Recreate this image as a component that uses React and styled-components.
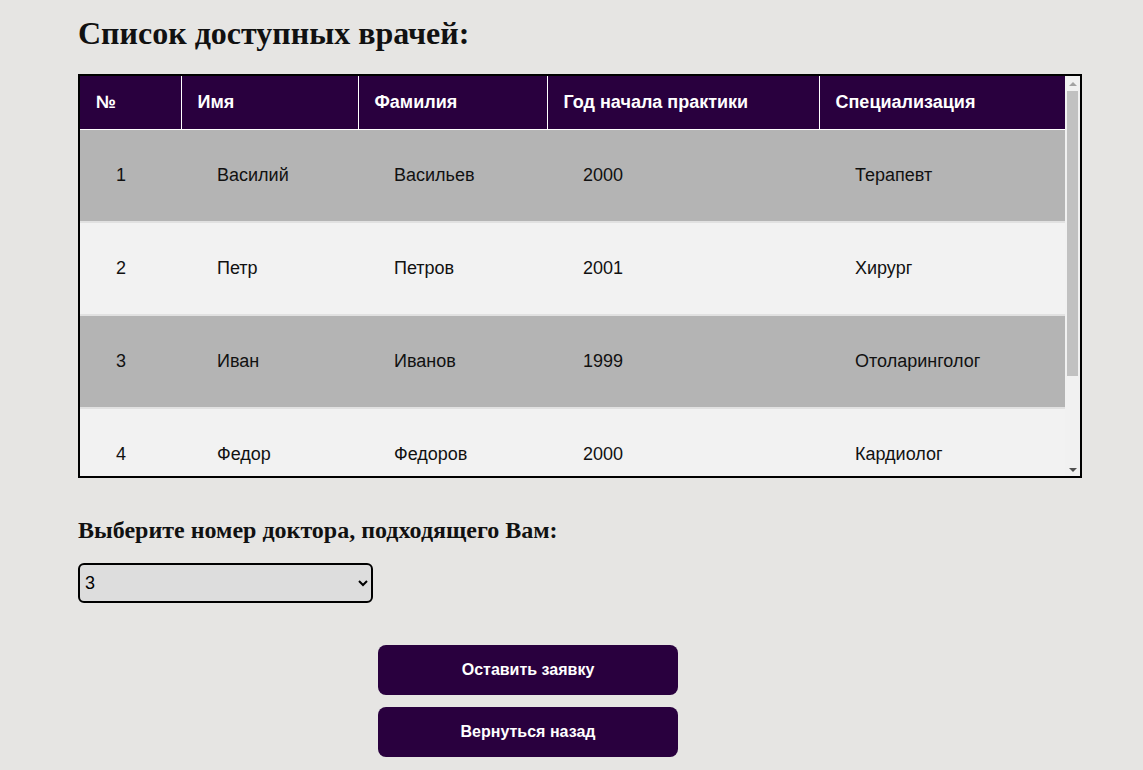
import React, { useLayoutEffect, useRef, useState } from "react";
import styled, { createGlobalStyle } from "styled-components";

const GlobalStyle = createGlobalStyle`
  html, body {
    margin: 0;
    background: #e6e5e3;
  }
  body {
    font-family: "Liberation Sans", Arial, sans-serif;
  }
`;

const doctors = [
  { id: 1, name: "Василий", surname: "Васильев", year: 2000, spec: "Терапевт" },
  { id: 2, name: "Петр", surname: "Петров", year: 2001, spec: "Хирург" },
  { id: 3, name: "Иван", surname: "Иванов", year: 1999, spec: "Отоларинголог" },
  { id: 4, name: "Федор", surname: "Федоров", year: 2000, spec: "Кардиолог" },
  { id: 5, name: "Сергей", surname: "Сергеев", year: 2005, spec: "Невролог" },
];

const columns = [
  ["№", 101],
  ["Имя", 177],
  ["Фамилия", 189],
  ["Год начала практики", 272],
  ["Специализация", 246],
];

const Page = styled.div`
  width: 1004px;
  padding: 0 0 14px 78px;
`;

const Title = styled.h1`
  font-family: "Liberation Serif", "Times New Roman", serif;
  font-size: 32px;
  font-weight: 700;
  color: #111;
  margin: 0;
  padding-top: 15px;
  line-height: 37px;
`;

const TableBox = styled.div`
  margin-top: 22px;
  height: 400px;
  border: 2px solid #000;
  display: flex;
  background: #f2f2f2;
`;

const Scroller = styled.div`
  flex: 1;
  overflow-y: auto;
  scrollbar-width: none;
  &::-webkit-scrollbar {
    display: none;
  }
`;

const ScrollBar = styled.div`
  width: 15px;
  display: flex;
  flex-direction: column;
  background: #f1f1f1;
`;

const Arrow = styled.div`
  height: 15px;
  display: flex;
  align-items: center;
  justify-content: center;
  &::before {
    content: "";
    border-left: 4px solid transparent;
    border-right: 4px solid transparent;
    ${(p) =>
      p.$down
        ? "border-top: 4px solid #505050; margin-top: 2px;"
        : "border-bottom: 4px solid #a3a3a3;"}
  }
`;

const Track = styled.div`
  flex: 1;
  padding: 0 2px;
`;

const Thumb = styled.div`
  background: #c1c1c1;
`;

const Table = styled.table`
  width: 100%;
  table-layout: fixed;
  border-collapse: collapse;
  font-size: 18px;
`;

const Th = styled.th`
  background: #29003e;
  color: #fff;
  font-weight: 700;
  text-align: left;
  height: 53px;
  padding: 0 0 0 16px;
  border-left: 1px solid #fff;
  border-bottom: 1px solid #fff;
  &:first-child {
    border-left: none;
  }
`;

const Tr = styled.tr`
  background: ${(p) => (p.$odd ? "#b4b4b4" : "#f2f2f2")};
  border-bottom: 2px solid #e1e1e1;
`;

const Td = styled.td`
  height: 91px;
  padding: 0 0 0 36px;
  color: #111;
`;

const Subtitle = styled.h2`
  font-family: "Liberation Serif", "Times New Roman", serif;
  font-size: 24px;
  font-weight: 700;
  color: #111;
  margin: 37px 0 0;
  line-height: 30px;
`;

const Select = styled.select`
  display: block;
  margin-top: 18px;
  width: 295px;
  height: 40px;
  border: 2px solid #000;
  border-radius: 6px;
  background: #dddddd;
  font-family: "Liberation Sans", Arial, sans-serif;
  font-size: 18px;
  color: #000;
  padding: 0 1px;
`;

const Actions = styled.div`
  display: flex;
  flex-direction: column;
  gap: 12px;
  margin: 42px 0 0 300px;
`;

const Button = styled.button`
  width: 300px;
  height: 50px;
  border: none;
  border-radius: 8px;
  background: #29003e;
  color: #fff;
  font-family: "Liberation Sans", Arial, sans-serif;
  font-size: 16px;
  font-weight: 700;
  cursor: pointer;
`;

export default function App() {
  const [choice, setChoice] = useState("3");
  const scrollRef = useRef(null);
  const [bar, setBar] = useState({ ratio: 1, top: 0 });

  const measure = () => {
    const el = scrollRef.current;
    if (!el) return;
    setBar({
      ratio: el.clientHeight / el.scrollHeight,
      top: el.scrollTop / el.scrollHeight,
    });
  };

  useLayoutEffect(measure, []);

  return (
    <Page>
      <GlobalStyle />
      <Title>Список доступных врачей:</Title>
      <TableBox>
        <Scroller ref={scrollRef} onScroll={measure}>
          <Table>
            <colgroup>
              {columns.map(([label, w]) => (
                <col key={label} style={{ width: w }} />
              ))}
            </colgroup>
            <thead>
              <tr>
                {columns.map(([label]) => (
                  <Th key={label}>{label}</Th>
                ))}
              </tr>
            </thead>
            <tbody>
              {doctors.map((d, i) => (
                <Tr key={d.id} $odd={i % 2 === 0}>
                  <Td>{d.id}</Td>
                  <Td>{d.name}</Td>
                  <Td>{d.surname}</Td>
                  <Td>{d.year}</Td>
                  <Td>{d.spec}</Td>
                </Tr>
              ))}
            </tbody>
          </Table>
        </Scroller>
        <ScrollBar>
          <Arrow />
          <Track>
            <Thumb
              style={{
                height: `${bar.ratio * 100}%`,
                marginTop: `${bar.top * 370}px`,
              }}
            />
          </Track>
          <Arrow $down />
        </ScrollBar>
      </TableBox>
      <Subtitle>Выберите номер доктора, подходящего Вам:</Subtitle>
      <Select value={choice} onChange={(e) => setChoice(e.target.value)}>
        {doctors.map((d) => (
          <option key={d.id} value={String(d.id)}>
            {d.id}
          </option>
        ))}
      </Select>
      <Actions>
        <Button>Оставить заявку</Button>
        <Button>Вернуться назад</Button>
      </Actions>
    </Page>
  );
}
